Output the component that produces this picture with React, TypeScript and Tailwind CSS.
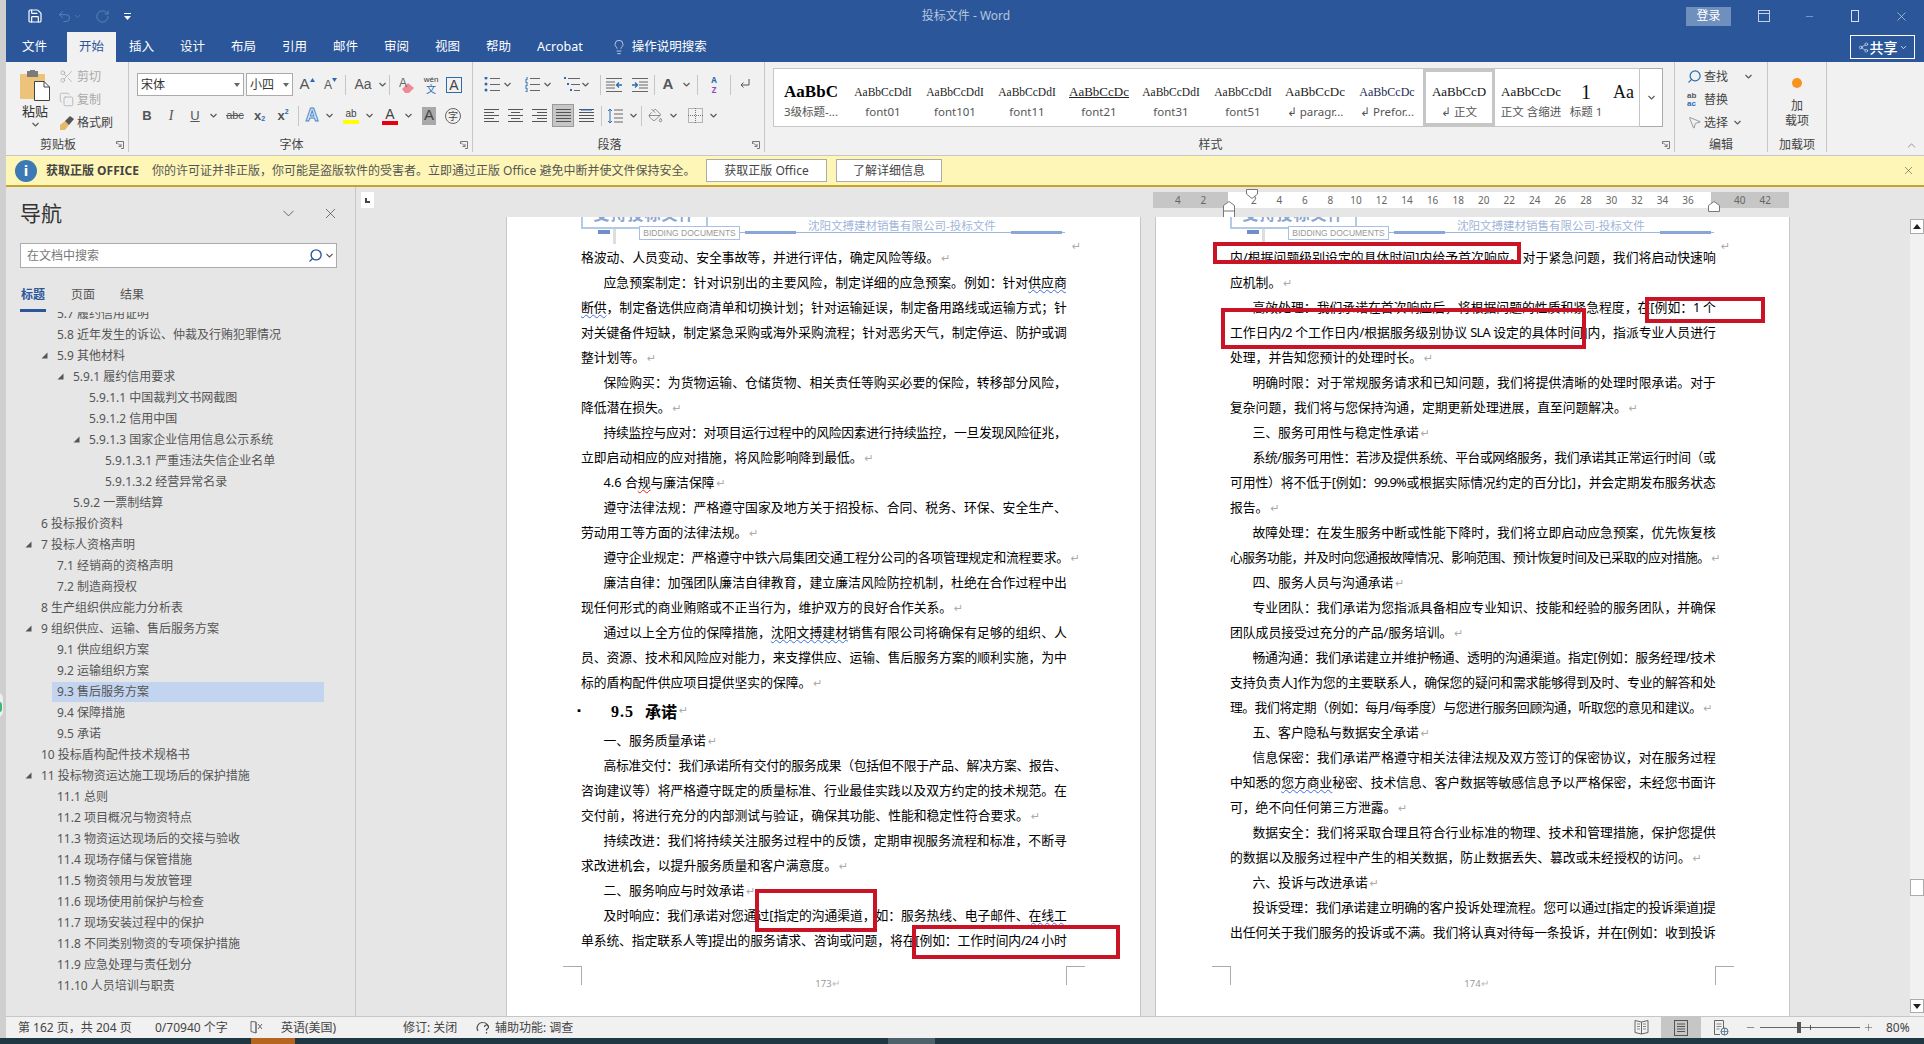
import React from 'react';
import clsx from 'clsx';
import {
  X, ChevronDown, ChevronUp, Search, Scissors, Copy, Lightbulb, Minus, Plus, Save, Undo2, RotateCw,
  MousePointer2, PaintBucket, Share2,
} from 'lucide-react';

const SERIF = "font-['Liberation_Serif','Noto_Sans_CJK_SC',serif]";
const ARIAL = "font-['Liberation_Sans','Noto_Sans_CJK_SC',sans-serif]";

/* ---------- ribbon bits ---------- */

const Caret = ({ className }: { className?: string }) => (
  <svg width="7" height="5" viewBox="0 0 7 5" className={className}>
    <path d="M0.5 1 L3.5 4 L6.5 1" fill="none" stroke="#555" strokeWidth="1.1" />
  </svg>
);

const Cell = ({ className, children }: { className: string; children?: React.ReactNode }) => (
  <div className={clsx('h-[23px] flex items-center justify-center shrink-0 text-[#555]', className)}>{children}</div>
);

const Sep = ({ className }: { className?: string }) => (
  <div className={clsx('w-px h-[20px] bg-[#c6c6c6] shrink-0 self-center', className)} />
);

const Launcher = () => (
  <svg width="8" height="8" viewBox="0 0 8 8" className="shrink-0">
    <path d="M0.5 3 V0.5 H7.5 V7.5 H5" fill="none" stroke="#777" />
    <path d="M1 1.5 L5 5.5 M5 3 V5.5 H2.5" fill="none" stroke="#777" />
  </svg>
);

const GroupLabel = ({ text, launcher, className }: { text: string; launcher?: boolean; className?: string }) => (
  <div className={clsx('h-[14px] mt-auto flex items-center text-[12px] leading-[14px] text-[#444]', className)}>
    <span className="flex-1 text-center">{text}</span>
    {launcher && <div className="w-[18px] flex items-center justify-end pr-[4px]"><Launcher /></div>}
  </div>
);

const AlignIcon = ({ kind }: { kind: 'left' | 'center' | 'right' | 'justify' | 'dist' }) => {
  const rows = [
    { left: [0, 15], center: [0, 15], right: [0, 15], justify: [0, 15], dist: [0, 15] },
    { left: [0, 10], center: [3, 12], right: [5, 15], justify: [0, 15], dist: [0, 15] },
    { left: [0, 15], center: [0, 15], right: [0, 15], justify: [0, 15], dist: [0, 15] },
    { left: [0, 10], center: [3, 12], right: [5, 15], justify: [0, 15], dist: [0, 15] },
    { left: [0, 15], center: [0, 15], right: [0, 15], justify: [0, 15], dist: [0, 15] },
  ];
  return (
    <svg width="15" height="13" viewBox="0 0 15 13">
      {rows.map((r, i) => (
        <path key={i} d={`M${r[kind][0]} ${i * 3 + 0.5} H${r[kind][1]}`} stroke="#555" fill="none" />
      ))}
      {kind === 'dist' && <path d="M2 1 H13 M2 1 l2 -1 M13 1 l-2 -1" stroke="#2b6cb0" fill="none" />}
    </svg>
  );
};

const ListIcon = ({ kind }: { kind: 'bullet' | 'number' | 'multi' }) => (
  <svg width="16" height="15" viewBox="0 0 16 15">
    {[1, 7, 13].map((y, i) => (
      <g key={y}>
        {kind === 'bullet' && <circle cx="2" cy={y} r="1.5" fill="#2b6cb0" />}
        {kind === 'number' && <path d={`M1 ${y - 2} h2 v4 h-2`} fill="none" stroke="#2b6cb0" />}
        {kind === 'multi' && <rect x={i * 3} y={y - 1} width="2" height="2" fill="#2b6cb0" />}
        <path d={`M${kind === 'multi' ? 4 + i * 3 : 6} ${y + 0.5} H16`} stroke="#666" />
      </g>
    ))}
  </svg>
);

const IndentIcon = ({ flip }: { flip?: boolean }) => (
  <svg width="16" height="14" viewBox="0 0 16 14" className={clsx(flip && '-scale-x-100')}>
    <path d="M0 0.5 H16 M7 4 H16 M7 7 H16 M7 10 H16 M0 13.5 H16" stroke="#666" fill="none" />
    <path d="M0 7 H5 M3 4.5 L5.5 7 L3 9.5" stroke="#2b6cb0" fill="none" strokeWidth="1.3" />
  </svg>
);

const PasteIcon = () => (
  <svg width="30" height="31" viewBox="0 0 30 31">
    <rect x="0" y="4" width="25" height="25" rx="1" fill="#edc27a" />
    <rect x="7" y="1" width="11" height="6" fill="#7b7b7b" />
    <rect x="10" y="0" width="5" height="3" fill="#7b7b7b" />
    <path d="M14.5 11.5 H24 L29.5 17 V30.5 H14.5 Z" fill="#fff" stroke="#444" />
    <path d="M24 11.5 V17 H29.5" fill="none" stroke="#444" />
  </svg>
);

const BrushIcon = () => (
  <svg width="16" height="16" viewBox="0 0 16 16">
    <path d="M1 15 L1 10 L6 6 L10 10 L6 15 Z" fill="#e6b96a" />
    <path d="M6 6 L11 1 L15 4 L10 10 Z" fill="#555" />
  </svg>
);

const RibbonRow1 = () => (
  <div className="flex items-center pl-[8px] pt-[11px]">
    <div className="w-[107px] h-[23px] bg-white border border-[#ababab] flex items-center justify-between px-[3px] text-[12px] text-[#333] shrink-0">
      <span>宋体</span>
      <svg width="6" height="4" viewBox="0 0 6 4"><path d="M0 0 H6 L3 4 Z" fill="#666" /></svg>
    </div>
    <div className="w-[47px] h-[23px] ml-[2px] bg-white border border-[#ababab] flex items-center justify-between px-[3px] text-[12px] text-[#333] shrink-0">
      <span>小四</span>
      <svg width="6" height="4" viewBox="0 0 6 4"><path d="M0 0 H6 L3 4 Z" fill="#666" /></svg>
    </div>
    <Cell className={clsx('w-[24px] ml-[2px] text-[15px]', ARIAL)}>
      A<svg width="5" height="4" viewBox="0 0 5 4" className="mb-[10px]"><path d="M0 4 L2.5 0 L5 4 Z" fill="#2b6cb0" /></svg>
    </Cell>
    <Cell className={clsx('w-[23px] text-[12px]', ARIAL)}>
      A<svg width="5" height="4" viewBox="0 0 5 4" className="mb-[10px]"><path d="M0 0 H5 L2.5 4 Z" fill="#2b6cb0" /></svg>
    </Cell>
    <Sep className="ml-[3px]" />
    <Cell className={clsx('w-[30px] pl-[4px] text-[14px]', ARIAL)}>Aa</Cell>
    <Cell className="w-[13px]"><Caret /></Cell>
    <Sep />
    <Cell className="w-[30px] ml-[2px]">
      <svg width="16" height="18" viewBox="0 0 16 18">
        <path d="M3 13 L9 7 L15 12 L10 17 H6 Z" fill="#ef8a98" />
        <text x="0" y="11" fontSize="12" fill="#666" fontFamily="Liberation Sans">A</text>
      </svg>
    </Cell>
    <Cell className="w-[18px] flex-col">
      <span className={clsx('text-[8px] leading-[9px] text-[#333]', ARIAL)}>wén</span>
      <span className="text-[10px] leading-[11px] text-[#2b6cb0]">文</span>
    </Cell>
    <Cell className="w-[28px]">
      <div className={clsx('w-[16px] h-[16px] border border-[#2b6cb0] flex items-center justify-center text-[14px] leading-none text-[#444]', ARIAL)}>A</div>
    </Cell>
  </div>
);

const RibbonRow2 = () => (
  <div className="flex items-center pl-[6px] mt-[8px]">
    <Cell className={clsx('w-[24px] text-[13px] font-bold', ARIAL)}>B</Cell>
    <Cell className={clsx('w-[24px] text-[14px] italic', SERIF)}>I</Cell>
    <Cell className={clsx('w-[24px] text-[13px] underline', ARIAL)}>U</Cell>
    <Cell className="w-[13px]"><Caret /></Cell>
    <Cell className={clsx('w-[26px] ml-[2px] text-[11px] line-through', ARIAL)}>abc</Cell>
    <Cell className={clsx('w-[23px] text-[13px] font-bold', ARIAL)}>x<span className="text-[7px] mt-[7px] text-[#2b6cb0]">2</span></Cell>
    <Cell className={clsx('w-[24px] text-[13px] font-bold', ARIAL)}>x<span className="text-[7px] mb-[7px] text-[#2b6cb0]">2</span></Cell>
    <Sep className="ml-[3px]" />
    <Cell className={clsx('w-[22px] ml-[2px] text-[18px] font-bold text-[#eaf2fb] [-webkit-text-stroke:1px_#4a86c8]', ARIAL)}>A</Cell>
    <Cell className="w-[12px]"><Caret /></Cell>
    <Cell className="w-[24px] ml-[4px] flex-col">
      <span className={clsx('text-[10px] leading-[12px] text-[#444]', ARIAL)}>ab</span>
      <div className="w-[16px] h-[4px] bg-[#ffff00]" />
    </Cell>
    <Cell className="w-[12px]"><Caret /></Cell>
    <Cell className="w-[24px] ml-[3px] flex-col">
      <span className={clsx('text-[14px] leading-[14px] text-[#444]', ARIAL)}>A</span>
      <div className="w-[16px] h-[4px] bg-[#e60012]" />
    </Cell>
    <Cell className="w-[12px]"><Caret /></Cell>
    <Cell className="w-[24px] ml-[3px]">
      <div className={clsx('w-[14px] h-[18px] bg-[#a9a9a9] flex items-center justify-center text-[15px] text-[#444]', ARIAL)}>A</div>
    </Cell>
    <Cell className="w-[24px]">
      <div className="w-[16px] h-[16px] rounded-full border border-[#666] flex items-center justify-center text-[10px] leading-none text-[#444]">字</div>
    </Cell>
  </div>
);

const ParaRow1 = () => (
  <div className="flex items-center pl-[11px] pt-[11px]">
    <Cell className="w-[16px]"><ListIcon kind="bullet" /></Cell>
    <Cell className="w-[24px] justify-start pl-[4px]"><Caret /></Cell>
    <Cell className="w-[16px]"><ListIcon kind="number" /></Cell>
    <Cell className="w-[24px] justify-start pl-[4px]"><Caret /></Cell>
    <Cell className="w-[16px]"><ListIcon kind="multi" /></Cell>
    <Cell className="w-[17px] justify-start pl-[2px]"><Caret /></Cell>
    <Sep className="ml-[3px]" />
    <Cell className="w-[26px]"><IndentIcon flip /></Cell>
    <Cell className="w-[26px]"><IndentIcon /></Cell>
    <Sep className="ml-[1px]" />
    <Cell className={clsx('w-[26px] text-[15px] font-bold', ARIAL)}>A</Cell>
    <Cell className="w-[10px]"><Caret /></Cell>
    <Sep className="ml-[6px]" />
    <Cell className="w-[32px] flex-col text-[8px] font-bold">
      <span className="leading-[10px] text-[#2b6cb0]">A</span>
      <span className="leading-[10px] text-[#8a4fb5]">Z</span>
    </Cell>
    <Sep />
    <Cell className="w-[28px]">
      <svg width="12" height="13" viewBox="0 0 12 13"><path d="M10 1 V7 H2 M4.5 4.5 L2 7 L4.5 9.5" fill="none" stroke="#555" /></svg>
    </Cell>
  </div>
);

const ParaRow2 = () => (
  <div className="flex items-center pl-[6px] mt-[8px]">
    <Cell className="w-[24px]"><AlignIcon kind="left" /></Cell>
    <Cell className="w-[24px]"><AlignIcon kind="center" /></Cell>
    <Cell className="w-[24px]"><AlignIcon kind="right" /></Cell>
    <Cell className="w-[22px] ml-[1px] bg-[#c6c6c6] border border-[#9a9a9a]"><AlignIcon kind="justify" /></Cell>
    <Cell className="w-[24px]"><AlignIcon kind="dist" /></Cell>
    <Sep className="ml-[3px]" />
    <Cell className="w-[26px]">
      <svg width="16" height="16" viewBox="0 0 16 16">
        <path d="M7 2 H16 M7 6 H16 M7 10 H16 M7 14 H16" stroke="#666" />
        <path d="M3 1 V15 M1 3 L3 1 L5 3 M1 13 L3 15 L5 13" fill="none" stroke="#2b6cb0" />
      </svg>
    </Cell>
    <Cell className="w-[10px]"><Caret /></Cell>
    <Sep className="ml-[3px]" />
    <Cell className="w-[26px]"><PaintBucket size={15} strokeWidth={1} color="#555" /></Cell>
    <Cell className="w-[10px]"><Caret /></Cell>
    <Cell className="w-[26px] ml-[4px]">
      <svg width="15" height="15" viewBox="0 0 15 15">
        <rect x="0.5" y="0.5" width="14" height="14" fill="none" stroke="#777" strokeDasharray="1 1" />
        <path d="M7.5 0 V15 M0 7.5 H15" stroke="#777" strokeDasharray="1 1" />
      </svg>
    </Cell>
    <Cell className="w-[10px]"><Caret /></Cell>
  </div>
);

const styleItems = [
  { sample: 'AaBbC', label: '3级标题-...', w: 'w-[72px]', cls: 'text-[17px] font-bold text-black' },
  { sample: 'AaBbCcDdI', label: 'font01', w: 'w-[72px]', cls: 'text-[11.5px] text-[#222]' },
  { sample: 'AaBbCcDdI', label: 'font101', w: 'w-[72px]', cls: 'text-[11.5px] text-[#222]' },
  { sample: 'AaBbCcDdI', label: 'font11', w: 'w-[72px]', cls: 'text-[11.5px] text-[#222]' },
  { sample: 'AaBbCcDc', label: 'font21', w: 'w-[72px]', cls: 'text-[13px] text-[#222] underline' },
  { sample: 'AaBbCcDdI', label: 'font31', w: 'w-[72px]', cls: 'text-[11.5px] text-[#222]' },
  { sample: 'AaBbCcDdI', label: 'font51', w: 'w-[72px]', cls: 'text-[11.5px] text-[#222]' },
  { sample: 'AaBbCcDc', label: '↲ paragr...', w: 'w-[72px]', cls: 'text-[13px] text-[#222]' },
  { sample: 'AaBbCcDc', label: '↲ Prefor...', w: 'w-[72px]', cls: 'text-[12px] text-[#1c2a55]' },
  { sample: 'AaBbCcD', label: '↲ 正文', w: 'w-[72px]', cls: 'text-[13px] text-[#111]', active: true },
  { sample: 'AaBbCcDc', label: '正文 含缩进', w: 'w-[72px]', cls: 'text-[13px] text-[#111]' },
  { sample: '1', label: '标题 1', w: 'w-[38px]', cls: 'text-[20px] text-[#111]' },
  { sample: 'Aa', label: '', w: 'w-[37px]', cls: 'text-[18px] text-[#111]' },
];

const Ribbon = () => (
  <div className="h-[94px] bg-[#f1f1f1] border-b border-[#c6c6c6] flex items-start pb-[3px]">
    {/* clipboard */}
    <div className="w-[123px] h-[90px] flex flex-col border-r border-[#c6c6c6] shrink-0">
      <div className="flex">
        <div className="w-[40px] ml-[9px] flex flex-col items-center pt-[8px]">
          <PasteIcon />
          <span className="text-[13px] leading-[16px] mt-[2px] text-[#333]">粘贴</span>
          <Caret className="mt-[3px]" />
        </div>
        <div className="flex flex-col pt-[3px] ml-[4px] text-[12px]">
          <div className="h-[23px] flex items-center gap-[3px] text-[#aaa]"><Scissors size={15} strokeWidth={1.2} color="#aaa" />剪切</div>
          <div className="h-[23px] flex items-center gap-[3px] text-[#aaa]"><Copy size={15} strokeWidth={1.2} color="#aaa" />复制</div>
          <div className="h-[23px] flex items-center gap-[2px] text-[#444]"><BrushIcon />格式刷</div>
        </div>
      </div>
      <GroupLabel text="剪贴板" launcher />
    </div>
    {/* font */}
    <div className="w-[344px] h-[90px] flex flex-col border-r border-[#c6c6c6] shrink-0">
      <RibbonRow1 />
      <RibbonRow2 />
      <GroupLabel text="字体" launcher />
    </div>
    {/* paragraph */}
    <div className="w-[292px] h-[90px] flex flex-col border-r border-[#c6c6c6] shrink-0">
      <ParaRow1 />
      <ParaRow2 />
      <GroupLabel text="段落" launcher />
    </div>
    {/* styles */}
    <div className="w-[910px] h-[90px] flex flex-col border-r border-[#c6c6c6] shrink-0">
      <div className="flex pl-[8px] pt-[6px]">
        <div className="w-[867px] h-[59px] bg-white border border-[#c6c6c6] flex items-stretch pl-[1px] shrink-0">
          {styleItems.map((s, i) => (
            <div
              key={i}
              className={clsx(
                'flex flex-col items-center overflow-hidden shrink-0',
                s.w,
                s.active && 'border-[3px] border-[#c6c6c6]',
              )}
            >
              <div className={clsx('flex items-end whitespace-nowrap overflow-hidden max-w-full leading-[20px]', s.active ? 'h-[30px]' : 'h-[33px] pt-[3px]', SERIF, s.cls)}>
                {s.sample}
              </div>
              <div className="text-[11.5px] leading-[14px] mt-[3px] text-[#555] whitespace-nowrap">{s.label}</div>
            </div>
          ))}
        </div>
        <div className="w-[23px] h-[59px] border border-l-0 border-[#ababab] bg-white flex items-center justify-center">
          <Caret />
        </div>
      </div>
      <GroupLabel text="样式" launcher />
    </div>
    {/* editing */}
    <div className="w-[93px] h-[90px] flex flex-col border-r border-[#c6c6c6] shrink-0">
      <div className="flex flex-col pt-[3px] pl-[12px] text-[12px] text-[#444]">
        <div className="h-[23px] flex items-center">
          <Search size={15} strokeWidth={2} color="#2b6cb0" className="-scale-x-100 shrink-0" />
          <span className="ml-[2px]">查找</span>
          <Caret className="ml-[17px]" />
        </div>
        <div className="h-[23px] flex items-center">
          <div className={clsx('w-[15px] text-[8px] leading-[8px] font-bold', ARIAL)}>
            <div className="text-[#555]">ab</div>
            <div className="text-[#2b6cb0]">ac</div>
          </div>
          <span className="ml-[2px]">替换</span>
        </div>
        <div className="h-[23px] flex items-center">
          <MousePointer2 size={15} strokeWidth={1} color="#666" className="shrink-0" />
          <span className="ml-[2px]">选择</span>
          <Caret className="ml-[6px]" />
        </div>
      </div>
      <GroupLabel text="编辑" />
    </div>
    {/* add-ins */}
    <div className="w-[59px] h-[90px] flex flex-col items-center border-r border-[#c6c6c6] shrink-0">
      <div className="w-[10px] h-[10px] rounded-full bg-[#f7931e] mt-[16px]" />
      <div className="text-[12px] leading-[15px] text-[#444] text-center mt-[10px]">加<br />载项</div>
      <GroupLabel text="加载项" />
    </div>
    <div className="flex-1 h-[90px] flex items-end justify-end pr-[6px]">
      <ChevronUp size={13} strokeWidth={1} color="#444" />
    </div>
  </div>
);

/* ---------- nav pane ---------- */

const tree: [string, number, boolean?, boolean?][] = [
  ['5.7 履约信用证明', 1],
  ['5.8 近年发生的诉讼、仲裁及行贿犯罪情况', 1],
  ['5.9 其他材料', 1, true],
  ['5.9.1 履约信用要求', 2, true],
  ['5.9.1.1 中国裁判文书网截图', 3],
  ['5.9.1.2 信用中国', 3],
  ['5.9.1.3 国家企业信用信息公示系统', 3, true],
  ['5.9.1.3.1 严重违法失信企业名单', 4],
  ['5.9.1.3.2 经营异常名录', 4],
  ['5.9.2 一票制结算', 2],
  ['6 投标报价资料', 0],
  ['7 投标人资格声明', 0, true],
  ['7.1 经销商的资格声明', 1],
  ['7.2 制造商授权', 1],
  ['8 生产组织供应能力分析表', 0],
  ['9 组织供应、运输、售后服务方案', 0, true],
  ['9.1 供应组织方案', 1],
  ['9.2 运输组织方案', 1],
  ['9.3 售后服务方案', 1, false, true],
  ['9.4 保障措施', 1],
  ['9.5 承诺', 1],
  ['10 投标盾构配件技术规格书', 0],
  ['11 投标物资运达施工现场后的保护措施', 0, true],
  ['11.1 总则', 1],
  ['11.2 项目概况与物资特点', 1],
  ['11.3 物资运达现场后的交接与验收', 1],
  ['11.4 现场存储与保管措施', 1],
  ['11.5 物资领用与发放管理', 1],
  ['11.6 现场使用前保护与检查', 1],
  ['11.7 现场安装过程中的保护', 1],
  ['11.8 不同类别物资的专项保护措施', 1],
  ['11.9 应急处理与责任划分', 1],
  ['11.10 人员培训与职责', 1],
];

const depthPad = ['pl-[19px]', 'pl-[35px]', 'pl-[51px]', 'pl-[67px]', 'pl-[83px]'];

const NavPane = () => (
  <div className="w-[350px] shrink-0 bg-[#e6e6e6] border-r border-[#c6c6c6] flex flex-col">
    <div className="flex items-center h-[24px] mt-[14px] pl-[14px] pr-[16px]">
      <span className="text-[21px] leading-[24px] text-[#333]">导航</span>
      <ChevronDown size={19} strokeWidth={1} color="#444" className="ml-auto" />
      <X size={17} strokeWidth={1} color="#444" className="ml-[24px]" />
    </div>
    <div className="h-[25px] w-[317px] ml-[14px] mt-[18px] bg-white border border-[#ababab] flex items-center pl-[6px] pr-[3px] shrink-0">
      <span className="text-[12px] text-[#777]">在文档中搜索</span>
      <Search size={15} strokeWidth={2.2} color="#2b579a" className="-scale-x-100 ml-auto" />
      <Caret className="ml-[3px]" />
    </div>
    <div className="flex gap-[25px] pl-[14px] mt-[19px] text-[12px] leading-[16px] text-[#555] shrink-0">
      <div className="w-[26px] flex flex-col items-center">
        <span className="font-bold text-[#2b579a]">标题</span>
        <div className="w-[26px] h-[3px] mt-[6px] bg-[#2b579a]" />
      </div>
      <span>页面</span>
      <span>结果</span>
    </div>
    <div className="flex-1 overflow-hidden">
      <div className="-mt-[9px]">
        {tree.map(([label, depth, tri, selected]) => (
          <div key={label} className={clsx('h-[21px] flex items-center text-[12px] text-[#555]', depthPad[depth])}>
            <div className="w-[16px] h-[21px] flex items-center shrink-0">
              {tri && (
                <svg width="7" height="7" viewBox="0 0 7 7"><path d="M6.5 0.5 V6.5 H0.5 Z" fill="#555" /></svg>
              )}
            </div>
            {selected ? (
              <div className="w-[272px] h-[20px] -ml-[5px] pl-[5px] flex items-center bg-[#c2d4f0]">{label}</div>
            ) : (
              <div className="whitespace-nowrap">{label}</div>
            )}
          </div>
        ))}
      </div>
    </div>
  </div>
);

/* ---------- document ---------- */

const Mark = () => (
  <span className="font-['DejaVu_Sans',sans-serif] text-[11px] text-[#aaaaaa] ml-[2px] tracking-normal">↵</span>
);

const W = ({ children }: { children: React.ReactNode }) => (
  <span className="underline decoration-wavy decoration-[#3b6fd4] decoration-1 underline-offset-[2px]">{children}</span>
);
const R = ({ children }: { children: React.ReactNode }) => (
  <span className="underline decoration-wavy decoration-[#e02020] decoration-1 underline-offset-[2px]">{children}</span>
);

// one rendered line of the page; f = runs full width, i = first line indent
const L = ({ i, f, tight, snug, children }: { i?: boolean; f?: boolean; tight?: boolean; snug?: boolean; children: React.ReactNode }) => (
  <div
    className={clsx(
      'h-[25px] leading-[25px] text-[12.8px] text-black',
      i && 'pl-[22.5px]',
      f ? '[text-align-last:justify] tracking-[-0.8px]' : 'whitespace-nowrap',
      tight && 'tracking-[-0.5px]',
      snug && 'tracking-[-0.22px]',
    )}
  >
    {children}
    {!f && <Mark />}
  </div>
);

const PageHeader = () => (
  <div className="relative h-[28px] shrink-0">
    <div className="absolute left-[74px] -top-[2px] w-[127px] h-[14px] border-2 border-t-0 border-[#b4c8e8] overflow-hidden flex justify-center">
      <span className="text-[16px] leading-[16px] font-bold tracking-[1px] text-[#8ba6d2] -mt-[9px]">支持投标文件</span>
    </div>
    <div className="absolute left-[91px] top-[13px] w-[12px] h-[4px] bg-[#6f8fc7]" />
    <div className="absolute left-[106px] top-[12px] w-[3px] h-[15px] bg-[#dddddd]" />
    <div className={clsx('absolute left-[132px] top-[9px] w-[101px] h-[14px] bg-white border border-[#a9c0e3] flex items-center justify-center text-[8.5px] leading-none text-[#999999] whitespace-nowrap', ARIAL)}>
      BIDDING DOCUMENTS
    </div>
    <div className="absolute left-[233px] top-[15px] w-[325px] h-px bg-[#9fb6dd]" />
    <div className="absolute left-[238px] top-[14px] w-[51px] h-[3px] bg-[#8aa6d6]" />
    <div className="absolute left-[504px] top-[14px] w-[51px] h-[3px] bg-[#8aa6d6]" />
    <div className="absolute left-[301px] top-[1px] text-[11.5px] leading-[16px] text-[#9fb5d9] whitespace-nowrap">沈阳文搏建材销售有限公司-投标文件</div>
    <div className="absolute left-[563px] top-[15px]"><Mark /></div>
  </div>
);

const PageFooter = ({ n }: { n: number }) => (
  <div className="h-[50px] mt-auto -mx-[18.5px] flex justify-between shrink-0">
    <div className="w-[19px] h-[19px] border-t border-r border-[#ababab]" />
    <div className="text-[9.5px] leading-[16px] mt-[10px] ml-[8px] text-[#999999]">{n}<span className="text-[#bbbbbb]">↵</span></div>
    <div className="w-[19px] h-[19px] border-t border-l border-[#ababab]" />
  </div>
);

const Box = ({ className }: { className: string }) => (
  <div className={clsx('absolute border-4 border-[#ca1425]', className)} />
);

const Page = ({ n, children, boxes }: { n: number; children: React.ReactNode; boxes: React.ReactNode }) => (
  <div className="relative w-[635px] h-full bg-white border-x border-[#c6c6c6] overflow-hidden flex flex-col shrink-0">
    <PageHeader />
    <div className="flex-1 flex flex-col pl-[74px] pr-[74px]">
      {children}
      <PageFooter n={n} />
    </div>
    {boxes}
  </div>
);

const Page173 = () => (
  <Page
    n={173}
    boxes={
      <>
        <Box className="left-[248px] top-[672px] w-[122px] h-[43px]" />
        <Box className="left-[405px] top-[708px] w-[208px] h-[34px]" />
      </>
    }
  >
    <L>格波动、人员变动、安全事故等，并进行评估，确定风险等级。</L>
    <L i f>应急预案制定：针对识别出的主要风险，制定详细的应急预案。例如：针对<W>供应商</W></L>
    <L f><W>断供</W>，制定备选供应商清单和切换计划；针对运输延误，制定备用路线或运输方式；针</L>
    <L f>对关键备件短缺，制定紧急采购或海外采购流程；针对恶劣天气，制定停运、防护或调</L>
    <L>整计划等。</L>
    <L i f>保险购买：为货物运输、仓储货物、相关责任等购买必要的保险，转移部分风险，</L>
    <L>降低潜在损失。</L>
    <L i f>持续监控与应对：对项目运行过程中的风险因素进行持续监控，一旦发现风险征兆，</L>
    <L>立即启动相应的应对措施，将风险影响降到最低。</L>
    <L i>4.6 合<R>规</R>与廉洁保障</L>
    <L i f>遵守法律法规：严格遵守国家及地方关于招投标、合同、税务、环保、安全生产、</L>
    <L>劳动用工等方面的法律法规。</L>
    <L i snug>遵守企业规定：严格遵守中铁六局集团交通工程分公司的各项管理规定和流程要求。</L>
    <L i f>廉洁自律：加强团队廉洁自律教育，建立廉洁风险防控机制，杜绝在合作过程中出</L>
    <L>现任何形式的商业贿赂或不正当行为，维护双方的良好合作关系。</L>
    <L i f>通过以上全方位的保障措施，<W>沈阳文搏建材</W>销售有限公司将确保有足够的组织、人</L>
    <L f>员、资源、技术和风险应对能力，来支撑供应、运输、售后服务方案的顺利实施，为中</L>
    <L>标的盾构配件供应项目提供坚实的保障。</L>
    <div className="h-[33px] -ml-[7px] flex items-center text-black shrink-0">
      <span className="w-[37px] text-[10px]">▪</span>
      <span className={clsx('text-[16px] font-bold tracking-[1px]', SERIF)}>9.5</span>
      <span className="text-[16px] font-bold ml-[11px]">承诺</span>
      <Mark />
    </div>
    <L i>一、服务质量承诺</L>
    <L i f>高标准交付：我们承诺所有交付的服务成果（包括但不限于产品、解决方案、报告、</L>
    <L f>咨询建议等）将严格遵守既定的质量标准、行业最佳实践以及双方约定的技术规范。在</L>
    <L>交付前，将进行充分的内部测试与验证，确保其功能、性能和稳定性符合要求。</L>
    <L i f>持续改进：我们将持续关注服务过程中的反馈，定期审视服务流程和标准，不断寻</L>
    <L>求改进机会，以提升服务质量和客户满意度。</L>
    <L i>二、服务响应与时效承诺</L>
    <L i f>及时响应：我们承诺对您通过[指定的沟通渠道，如：服务热线、电子邮件、<W>在线工</W></L>
    <L f>单系统、指定联系人等]提出的服务请求、咨询或问题，将在[例如：工作时间内/24 小时</L>
  </Page>
);

const Page174 = () => (
  <Page
    n={174}
    boxes={
      <>
        <Box className="left-[57px] top-[25px] w-[308px] h-[22px]" />
        <Box className="left-[489px] top-[80px] w-[120px] h-[26px]" />
        <Box className="left-[65px] top-[91px] w-[365px] h-[41px]" />
      </>
    }
  >
    <L f>内/根据问题级别设定的具体时间]内给予首次响应。对于紧急问题，我们将启动快速响</L>
    <L>应机制。</L>
    <L i f>高效处理：我们承诺在首次响应后，将根据问题的性质和紧急程度，在[例如：1 个</L>
    <L f>工作日内/2 个工作日内/根据服务级别协议 SLA 设定的具体时间]内，指派专业人员进行</L>
    <L>处理，并告知您预计的处理时长。</L>
    <L i f>明确时限：对于常规服务请求和已知问题，我们将提供清晰的处理时限承诺。对于</L>
    <L>复杂问题，我们将与您保持沟通，定期更新处理进展，直至问题解决。</L>
    <L i>三、服务可用性与稳定性承诺</L>
    <L i f>系统/服务可用性：若涉及提供系统、平台或网络服务，我们承诺其正常运行时间（或</L>
    <L f>可用性）将不低于[例如：99.9%或根据实际情况约定的百分比]，并会定期发布服务状态</L>
    <L>报告。</L>
    <L i f>故障处理：在发生服务中断或性能下降时，我们将立即启动应急预案，优先恢复核</L>
    <L tight>心服务功能，并及时向您通报故障情况、影响范围、预计恢复时间及已采取的应对措施。</L>
    <L i>四、服务人员与沟通承诺</L>
    <L i f>专业团队：我们承诺为您指派具备相应专业知识、技能和经验的服务团队，并确保</L>
    <L>团队成员接受过充分的产品/服务培训。</L>
    <L i f>畅通沟通：我们承诺建立并维护畅通、透明的沟通渠道。指定[例如：服务经理/技术</L>
    <L f>支持负责人]作为您的主要联系人，确保您的疑问和需求能够得到及时、专业的解答和处</L>
    <L tight>理。我们将定期（例如：每月/每季度）与您进行服务回顾沟通，听取您的意见和建议。</L>
    <L i>五、客户隐私与数据安全承诺</L>
    <L i f>信息保密：我们承诺严格遵守相关法律法规及双方签订的保密协议，对在服务过程</L>
    <L f>中知悉的<W>您方商业</W>秘密、技术信息、客户数据等敏感信息予以严格保密，未经您书面许</L>
    <L>可，绝不向任何第三方泄露。</L>
    <L i f>数据安全：我们将采取合理且符合行业标准的物理、技术和管理措施，保护您提供</L>
    <L>的数据以及服务过程中产生的相关数据，防止数据丢失、篡改或未经授权的访问。</L>
    <L i>六、投诉与改进承诺</L>
    <L i f>投诉受理：我们承诺建立明确的客户投诉处理流程。您可以通过[指定的投诉渠道]提</L>
    <L f>出任何关于我们服务的投诉或不满。我们将认真对待每一条投诉，并在[例如：收到投诉</L>
  </Page>
);

const Ruler = () => {
  const tick = 'w-[25.55px] text-center shrink-0';
  const nums = [2, 4, 6, 8, 10, 12, 14, 16, 18, 20, 22, 24, 26, 28, 30, 32, 34, 36];
  return (
    <div className="relative ml-[779px] h-[16px] flex text-[10px] leading-[16px] text-[#666666]">
      <div className="w-[75px] bg-[#c6c6c6] flex pl-[12px]">
        <span className={tick}>4</span>
        <span className={tick}>2</span>
      </div>
      <div className="w-[483px] bg-white flex pl-[13px]">
        {nums.map((v) => <span key={v} className={tick}>{v}</span>)}
      </div>
      <div className="w-[78px] bg-[#c6c6c6] flex pl-[16px]">
        <span className={tick}>40</span>
        <span className={tick}>42</span>
      </div>
      {/* indent markers sit on top of the ruler */}
      <svg width="12" height="17" viewBox="0 0 12 17" className="absolute left-[70px] top-[9px]">
        <path d="M0.5 10 V4.5 L6 0.5 L11.5 4.5 V10 H0.5 V16.5 H11.5 V10" fill="#fff" stroke="#777" />
      </svg>
      <svg width="12" height="10" viewBox="0 0 12 10" className="absolute left-[93px] -top-[3px]">
        <path d="M0.5 0.5 H11.5 V5 L6 9.5 L0.5 5 Z" fill="#fff" stroke="#777" />
      </svg>
      <svg width="12" height="11" viewBox="0 0 12 11" className="absolute left-[555px] top-[9px]">
        <path d="M0.5 10.5 V4.5 L6 0.5 L11.5 4.5 V10.5 Z" fill="#fff" stroke="#777" />
      </svg>
    </div>
  );
};

const ScrollBtn = ({ up }: { up?: boolean }) => (
  <div className={clsx('bg-white border border-[#ababab] flex items-center justify-center text-[#222] shrink-0', up ? 'h-[15px]' : 'h-[14px]')}>
    <svg width="8" height="5" viewBox="0 0 8 5">
      <path d={up ? 'M0 5 L4 0 L8 5 Z' : 'M0 0 H8 L4 5 Z'} fill="#222" />
    </svg>
  </div>
);

const Scrollbar = () => (
  <div className="w-[14px] shrink-0 flex flex-col pt-[32px]">
    <ScrollBtn up />
    <div className="flex-1 bg-[#f1f1f1] flex flex-col pb-[3px]">
      <div className="h-[645px] shrink-0" />
      <div className="h-[17px] bg-white border border-[#ababab] shrink-0" />
      <div className="flex-1" />
      <ScrollBtn />
    </div>
  </div>
);

const DocArea = () => (
  <div className="flex-1 flex bg-[#e6e6e6] min-w-0">
    <div className="flex-1 flex flex-col min-w-0">
      <div className="h-[30px] pt-[5px] flex shrink-0">
        <div className="ml-[5px] w-[13px] h-[16px] bg-white flex items-center justify-center shrink-0">
          <div className="w-[5px] h-[5px] border-l-2 border-b-2 border-[#444]" />
        </div>
        <Ruler />
      </div>
      <div className="flex-1 flex pl-[150px] gap-[14px] min-h-0">
        <Page173 />
        <Page174 />
      </div>
    </div>
    <Scrollbar />
  </div>
);

/* ---------- chrome ---------- */

const TitleBar = () => (
  <div className="h-[32px] flex items-center text-white shrink-0">
    <div className="w-[240px] flex items-center pl-[21px]">
      <Save size={16} strokeWidth={1.8} color="#fff" />
      <Undo2 size={15} strokeWidth={1.5} color="#5f83b8" className="ml-[14px]" />
      <ChevronDown size={9} color="#5f83b8" className="ml-[1px]" />
      <RotateCw size={15} strokeWidth={1.5} color="#5f83b8" className="ml-[13px]" />
      <div className="ml-[14px] flex flex-col items-center gap-[2px]">
        <div className="w-[7px] h-px bg-white" />
        <svg width="7" height="4" viewBox="0 0 7 4"><path d="M0 0 H7 L3.5 4 Z" fill="#fff" /></svg>
      </div>
    </div>
    <div className="flex-1 text-center text-[12px] text-[#b4c5df]">投标文件 - Word</div>
    <div className="w-[238px] flex items-center shrink-0">
      <div className="w-[45px] h-[19px] bg-[#6f8fbd] flex items-center justify-center text-[12px] text-white">登录</div>
      <div className="w-[46px] ml-[10px] flex justify-center">
        <div className="w-[12px] h-[12px] border border-[#c5d2e5] flex flex-col"><div className="h-[3px] border-b border-[#c5d2e5]" /></div>
      </div>
      <div className="w-[46px] flex justify-center"><Minus size={11} strokeWidth={1} color="#d5dfee" /></div>
      <div className="w-[46px] flex justify-center">
        <div className="w-[8px] h-[12px] border border-[#d5dfee]" />
      </div>
      <div className="w-[46px] flex justify-center"><X size={15} strokeWidth={1} color="#d5dfee" /></div>
    </div>
  </div>
);

const tabs = ['插入', '设计', '布局', '引用', '邮件', '审阅', '视图', '帮助'];

const TabBar = () => (
  <div className="h-[30px] flex items-stretch text-white text-[12.5px] shrink-0">
    <div className="w-[57px] flex items-center justify-center">文件</div>
    <div className="w-[49px] ml-[4px] bg-[#f1f1f1] text-[#2b579a] flex items-center justify-center">开始</div>
    {tabs.map((t) => (
      <div key={t} className="w-[51px] flex items-center justify-center">{t}</div>
    ))}
    <div className="flex items-center ml-[13px]">Acrobat</div>
    <div className="flex items-center ml-[28px] gap-[5px]">
      <Lightbulb size={16} strokeWidth={1} color="#fff" />
      操作说明搜索
    </div>
    <div className="ml-auto mr-[9px] mt-[3px] w-[65px] h-[24px] border border-white flex items-center justify-center gap-[1px] text-[14px]">
      <Share2 size={11} strokeWidth={1.2} color="#fff" />
      <span className="font-medium">共享</span>
      <ChevronDown size={9} color="#fff" />
    </div>
  </div>
);

const InfoBar = () => (
  <div className="h-[31px] bg-[#fdf6b6] border-b-[2px] border-[#c9a227] flex items-center shrink-0 text-[12px]">
    <div className="w-[22px] h-[22px] ml-[9px] rounded-full bg-[#3d7ab5] flex items-center justify-center text-white text-[15px] font-bold leading-none shrink-0">i</div>
    <span className="ml-[9px] font-bold text-[#444] w-[106px] whitespace-nowrap">获取正版 OFFICE</span>
    <span className="text-[#555] w-[554px] whitespace-nowrap">你的许可证并非正版，你可能是盗版软件的受害者。立即通过正版 Office 避免中断并使文件保持安全。</span>
    <div className="w-[121px] h-[23px] bg-white border border-[#ababab] flex items-center justify-center text-[#444] shrink-0">获取正版 Office</div>
    <div className="w-[106px] h-[23px] ml-[9px] bg-white border border-[#ababab] flex items-center justify-center text-[#444] shrink-0">了解详细信息</div>
    <X size={13} strokeWidth={1} color="#444" className="ml-auto mr-[9px]" />
  </div>
);

const StatusBar = () => (
  <div className="h-[22px] bg-[#f1f1f1] border-t border-[#c6c6c6] flex items-center text-[12px] text-[#444] shrink-0">
    <span className="ml-[12px] w-[137px] whitespace-nowrap">第 162 页，共 204 页</span>
    <span className="w-[95px] whitespace-nowrap">0/70940 个字</span>
    <svg width="14" height="13" viewBox="0 0 14 13" className="shrink-0">
      <path d="M6 1 L1 0.5 V10.5 L6 12 Z M6 12 V1" fill="none" stroke="#666" />
      <path d="M8 3 L12 8 M12 3 L8 8" stroke="#666" fill="none" />
    </svg>
    <span className="ml-[17px] w-[122px] whitespace-nowrap">英语(美国)</span>
    <span className="w-[72px] whitespace-nowrap">修订: 关闭</span>
    <svg width="16" height="14" viewBox="0 0 16 14" className="shrink-0">
      <path d="M3 10 A5.5 5.5 0 0 1 8 1.5 A5.5 5.5 0 0 1 13 5" fill="none" stroke="#555" strokeWidth="1.2" />
      <path d="M9.5 6 a2 2 0 1 1 3 1.7 l-1 .8 v1 M11.5 11 v1.5" fill="none" stroke="#444" strokeWidth="1.2" />
    </svg>
    <span className="ml-[4px] whitespace-nowrap">辅助功能: 调查</span>
    <div className="ml-auto flex items-center h-full">
      <div className="w-[40px] h-full flex items-center justify-center">
        <svg width="15" height="15" viewBox="0 0 15 15">
          <path d="M7.5 2 L1 0.5 V12.5 L7.5 14 L14 12.5 V0.5 Z M7.5 2 V14" fill="none" stroke="#666" />
          <path d="M3 4 H6 M3 6.5 H6 M3 9 H6 M9 4 H12 M9 6.5 H12 M9 9 H12" stroke="#888" />
        </svg>
      </div>
      <div className="w-[40px] h-full bg-[#c6c6c6] flex items-center justify-center">
        <svg width="14" height="16" viewBox="0 0 14 16">
          <rect x="0.5" y="0.5" width="13" height="15" fill="none" stroke="#555" />
          <path d="M3 4 H11 M3 6.5 H11 M3 9 H11 M3 11.5 H11" stroke="#555" />
        </svg>
      </div>
      <div className="w-[40px] h-full flex items-center justify-center">
        <svg width="15" height="16" viewBox="0 0 15 16">
          <path d="M0.5 0.5 H9.5 V8 M0.5 0.5 V14.5 H6" fill="none" stroke="#666" />
          <path d="M2.5 4 H7.5 M2.5 6.5 H7.5 M2.5 9 H5.5" stroke="#888" />
          <circle cx="10.5" cy="11.5" r="3.5" fill="#f1f1f1" stroke="#666" />
          <path d="M7 11.5 H14 M10.5 8 V15" stroke="#3b78b3" strokeWidth="0.8" />
        </svg>
      </div>
      <div className="w-[19px] flex justify-center"><Minus size={11} strokeWidth={1.4} color="#555" /></div>
      <div className="relative w-[100px] h-px bg-[#666666] shrink-0">
        <div className="absolute left-[37px] -top-[5px] w-[4px] h-[11px] bg-[#555555]" />
        <div className="absolute left-[50px] -top-[2px] w-px h-[5px] bg-[#555555]" />
      </div>
      <div className="w-[16px] flex justify-center"><Plus size={11} strokeWidth={1.2} color="#555" /></div>
      <span className="w-[48px] pl-[10px] whitespace-nowrap">80%</span>
    </div>
  </div>
);

export default function App() {
  return (
    <div className="w-[1924px] h-[1044px] flex flex-col overflow-hidden font-['Noto_Sans','Noto_Sans_CJK_SC',sans-serif]">
      <div className="flex-1 flex min-h-0">
        <div className="relative w-[6px] bg-[#cfcfcf] shrink-0 overflow-hidden">
          {/* edge of the other window's floating ball behind this one */}
          <div className="absolute -left-[10px] top-[692px] w-[13px] h-[26px] rounded-full bg-[#eeeeee]" />
          <div className="absolute -left-[3px] top-[702px] w-[5px] h-[10px] rounded-full bg-[#3cb878]" />
        </div>
        <div className="flex-1 flex flex-col min-w-0">
          <div className="bg-[#2b579a] shrink-0">
            <TitleBar />
            <TabBar />
          </div>
          <Ribbon />
          <InfoBar />
          <div className="flex-1 flex min-h-0">
            <NavPane />
            <DocArea />
          </div>
          <StatusBar />
        </div>
      </div>
      <div className="h-[6px] bg-[#1f3742] flex shrink-0">
        <div className="w-[251px]" />
        <div className="w-[44px] bg-[#b5651d]" />
        <div className="w-[593px]" />
        <div className="w-[47px] bg-[#4d626b]" />
      </div>
    </div>
  );
}
